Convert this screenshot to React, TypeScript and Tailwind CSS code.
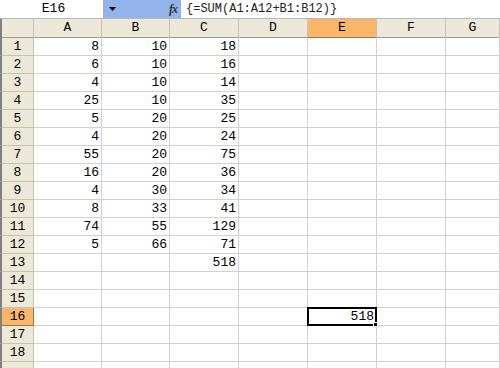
import React from 'react';

const colA = [8, 6, 4, 25, 5, 4, 55, 16, 4, 8, 74, 5];
const colB = [10, 10, 10, 10, 20, 20, 20, 20, 30, 33, 55, 66];
const colC = [18, 16, 14, 35, 25, 24, 75, 36, 34, 41, 129, 71, 518];
const letters = ['A', 'B', 'C', 'D', 'E', 'F', 'G'];

const gridCols = 'grid grid-cols-[34px_68px_68px_69px_69px_69px_69px_1fr]';

function FormulaBar() {
  return (
    <div className="flex h-[19px] border-b border-[#b8b8b8] bg-white font-['Liberation_Mono',monospace] text-[13px] leading-[18px] text-black">
      <div className="w-[103px] text-center pl-[4px]">E16</div>
      <div className="flex w-[78px] items-center justify-between bg-[#92b4ea] pl-[6px] pr-[4px]">
        <svg width="7" height="4" viewBox="0 0 7 4">
          <path d="M0 0h7L3.5 4z" fill="#000" />
        </svg>
        <span className="font-['Liberation_Serif',serif] text-[12px] font-bold italic tracking-[-1px] text-[#333]">
          fx
        </span>
      </div>
      <div className="pl-[5px] text-[12px] text-[#222]">{'{=SUM(A1:A12+B1:B12)}'}</div>
    </div>
  );
}

function HeaderRow() {
  return (
    <div className={`${gridCols} h-[19px] border-b border-[#9c9b91] bg-[#ece9d8] font-['Liberation_Mono',monospace] text-[13px] leading-[18px] text-black`}>
      <div className="border-r border-[#c5c2b2] border-l-2 border-l-[#808080]" />
      {letters.map((l) => (
        <div
          key={l}
          className={
            l === 'E'
              ? 'border-r border-[#c5c2b2] bg-[#fbb66c] text-center border-b-2 border-b-[#a0783c]'
              : 'border-r border-[#c5c2b2] text-center'
          }
        >
          {l}
        </div>
      ))}
    </div>
  );
}

function Row({ n }: { n: number }) {
  const i = n - 1;
  const vals = [colA[i], colB[i], colC[i], undefined, n === 16 ? 518 : undefined, undefined, undefined];
  const active = n === 16;
  return (
    <div className={`${gridCols} h-[18px] font-['Liberation_Mono',monospace] text-[13px] leading-[17px] text-black`}>
      <div
        className={
          active
            ? 'border-b border-r border-[#a0783c] border-l-2 border-l-[#808080] bg-[#fbb66c] text-center'
            : 'border-b border-r border-[#c5c2b2] border-l-2 border-l-[#808080] bg-[#ece9d8] text-center'
        }
      >
        {n < 19 ? n : ''}
      </div>
      {vals.map((v, c) => (
        <div key={c} className="relative border-b border-r border-[#d2d2d2] bg-white pr-[2px] text-right">
          {v}
          {active && c === 4 && (
            <>
              <div className="absolute left-[-1px] top-[-1px] right-[-1px] bottom-[-1px] border-2 border-black" />
              <div className="absolute right-[-3px] bottom-[-3px] h-[6px] w-[6px] border border-white bg-black" />
            </>
          )}
        </div>
      ))}
    </div>
  );
}

export default function App() {
  const rows = Array.from({ length: 19 }, (_, i) => i + 1);
  return (
    <div className="h-[368px] w-[500px] overflow-hidden bg-white">
      <FormulaBar />
      <HeaderRow />
      {rows.map((n) => (
        <Row key={n} n={n} />
      ))}
    </div>
  );
}
